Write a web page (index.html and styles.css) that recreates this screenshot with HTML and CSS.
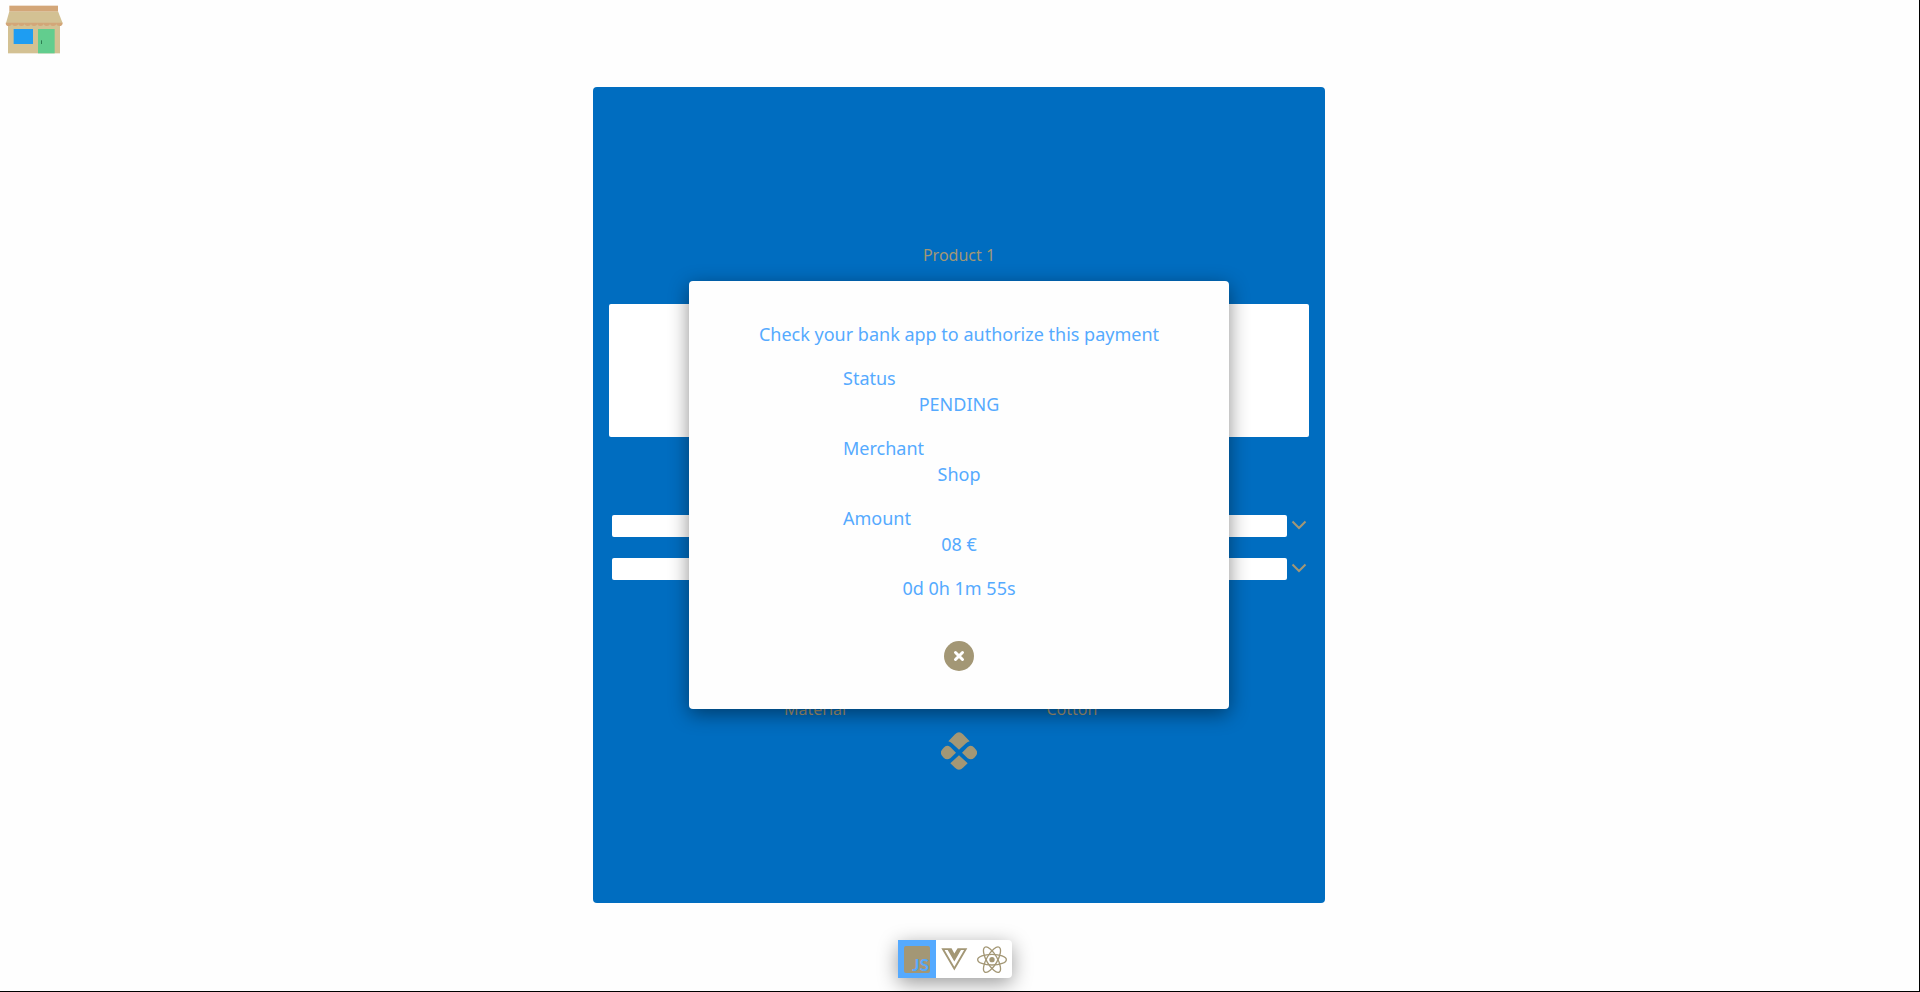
FILE: index.html
```html
<!DOCTYPE html>
<html lang="en">
<head>
<meta charset="utf-8">
<title>Shop</title>
<link rel="stylesheet" href="styles.css">
</head>
<body>
<div class="page">
  <header class="header">
    <a class="home" href="#" aria-label="Shop home">
      <svg class="home-icon" viewBox="0 0 240 192" aria-hidden="true">
        <rect x="24" y="66" width="156" height="94" fill="#d3c193"/>
        <path d="M28 34H174L188 70H18Z" fill="#d3c193"/>
        <rect x="28" y="17" width="146" height="17" fill="#d3a678"/>
        <path d="M17 68H188Q188 78 178 78Q169 78 169 70Q169 78 159 78Q150 78 150 70Q150 78 140 78Q131 78 131 70Q131 78 121 78Q112 78 112 70Q112 78 102 78Q93 78 93 70Q93 78 83 78Q74 78 74 70Q74 78 64 78Q55 78 55 70Q55 78 45 78Q36 78 36 70Q36 78 26 78Q17 78 17 68Z" fill="#d3a678"/>
        <rect x="41" y="87" width="58" height="45" fill="#1e9df2"/>
        <rect x="114" y="87" width="50" height="73" fill="#62cd8e"/>
        <rect x="123" y="121" width="3" height="11" fill="#2c7d52"/>
      </svg>
    </a>
  </header>

  <main class="product">
    <h1 class="product-name">Product 1</h1>
    <textarea class="description" aria-label="Description"></textarea>
    <div class="options">
      <div class="option">
        <input class="option-input" type="text" aria-label="Option 1">
        <button class="option-toggle" type="button" aria-label="Open option 1">
          <svg class="chevron" viewBox="0 0 14 8" aria-hidden="true"><path d="M0.500 0.500L7 7L13.500 0.500"/></svg>
        </button>
      </div>
      <div class="option">
        <input class="option-input" type="text" aria-label="Option 2">
        <button class="option-toggle" type="button" aria-label="Open option 2">
          <svg class="chevron" viewBox="0 0 14 8" aria-hidden="true"><path d="M0.500 0.500L7 7L13.500 0.500"/></svg>
        </button>
      </div>
    </div>
    <dl class="attributes">
      <dt>Material</dt>
      <dd>Cotton</dd>
    </dl>
    <button class="pay" type="button" aria-label="Pay">
      <svg class="pay-icon" viewBox="0 0 108 114" aria-hidden="true">
        <path d="M22 28L42 7Q54-5 66 7L86 28Q80 29 75 34L54 53L33 34Q28 29 22 28Z"/>
        <path d="M54 70L80 94L66 107Q54 119 42 107L28 94Z"/>
        <path d="M45 62L28 79Q17 86 8 77L3 71Q-4 62 3 53L8 47Q17 36 28 45Z"/>
        <path d="M63 62L80 79Q91 86 100 77L105 71Q112 62 105 53L100 47Q91 36 80 45Z"/>
      </svg>
    </button>

    <section class="modal" role="dialog" aria-labelledby="modal-title">
      <h2 class="modal-title" id="modal-title">Check your bank app to authorize this payment</h2>
      <dl class="payment">
        <div><dt>Status</dt><dd>PENDING</dd></div>
        <div><dt>Merchant</dt><dd>Shop</dd></div>
        <div><dt>Amount</dt><dd>08 €</dd></div>
      </dl>
      <p class="countdown">0d 0h 1m 55s</p>
      <button class="close" type="button" aria-label="Close">
        <svg class="close-icon" viewBox="0 0 12 12" aria-hidden="true"><path d="M2.500 2.500L9.500 9.500M9.500 2.500L2.500 9.500"/></svg>
      </button>
    </section>
  </main>

  <nav class="frameworks" aria-label="Framework">
    <button class="framework framework-active" type="button" aria-label="JavaScript">
      <svg class="framework-icon" viewBox="0 0 38 38" aria-hidden="true">
        <rect x="6" y="6" width="26" height="27" rx="2"/>
        <text class="js-mark" x="31" y="31" text-anchor="end">JS</text>
      </svg>
    </button>
    <button class="framework" type="button" aria-label="Vue">
      <svg class="framework-icon" viewBox="-92 -78 655 655" aria-hidden="true">
        <path d="M356.900 64.300H280l-56 88.600-48-88.600H0L224 448 448 64.300h-91.100zm-301.200 32h53.800L224 294.500 338.400 96.300h53.800L224 384.500 55.700 96.300z"/>
      </svg>
    </button>
    <button class="framework" type="button" aria-label="React">
      <svg class="framework-icon react" viewBox="-54 -59 114 114" aria-hidden="true">
        <circle r="8"/>
        <ellipse rx="43" ry="16"/>
        <ellipse rx="43" ry="16" transform="rotate(60)"/>
        <ellipse rx="43" ry="16" transform="rotate(120)"/>
      </svg>
    </button>
  </nav>
</div>
</body>
</html>
```
FILE: styles.css
```css
:root {
  --blue: #006dc0;
  --sky: #55aaff;
  --tan: #a39775;
  --paper: #fefefe;
}

* {
  box-sizing: border-box;
  margin: 0;
}

body {
  font: 16px/22px "Noto Sans", sans-serif;
  color: var(--tan);
  background: var(--paper);
}

button {
  display: flex;
  align-items: center;
  justify-content: center;
  padding: 0;
  border: 0;
  background: none;
  color: inherit;
  cursor: pointer;
}

svg {
  display: block;
  fill: currentColor;
}

.page {
  display: flex;
  flex-direction: column;
  align-items: center;
  min-height: 100vh;
  padding-right: 1px;
  border-right: 1px solid #000;
  border-bottom: 1px solid #000;
}

.header {
  align-self: stretch;
  display: flex;
  margin-bottom: 23px;
}

.home-icon {
  width: 80px;
  height: 64px;
}

.product {
  position: relative;
  display: flex;
  flex-direction: column;
  align-items: center;
  width: 732px;
  max-width: 100%;
  padding: 157px 16px 133px;
  border-radius: 4px;
  background: var(--blue);
}

.product-name {
  font-size: 16px;
  font-weight: 400;
  line-height: 22px;
}

.description {
  width: 100%;
  height: 133px;
  margin-top: 38px;
  border: 0;
  border-radius: 2px;
  background: #fff;
  resize: none;
}

.options {
  display: flex;
  flex-direction: column;
  align-self: stretch;
  gap: 21px;
  margin: 78px 3px 0;
}

.option {
  display: flex;
  gap: 5px;
}

.option-input {
  flex: 1;
  min-width: 0;
  height: 22px;
  border: 0;
  border-radius: 2px;
  background: #fff;
}

.option-toggle {
  padding-bottom: 2px;
}

.chevron {
  width: 14px;
  height: 8px;
  overflow: visible;
  fill: none;
  stroke: currentColor;
  stroke-width: 2;
}

.attributes {
  align-self: stretch;
  display: grid;
  grid-template-columns: 1fr 1fr;
  margin-top: 118px;
  padding-left: 25%;
}

.pay {
  margin-top: 12px;
}

.pay-icon {
  width: 36px;
  height: 38px;
}

.modal {
  position: absolute;
  top: 194px;
  left: 50%;
  transform: translateX(-50%);
  display: flex;
  flex-direction: column;
  align-items: center;
  gap: 18px;
  width: 540px;
  max-width: 100%;
  padding: 40px 40px 38px;
  border-radius: 4px;
  background: var(--paper);
  box-shadow: 0 5px 20px rgba(0, 0, 0, 0.45);
  color: var(--sky);
  font-size: 18px;
  line-height: 26px;
}

.modal-title {
  font-size: 18px;
  font-weight: 400;
}

.payment {
  display: grid;
  gap: 18px;
  width: 232px;
}

.payment dd {
  text-align: center;
}

.close {
  width: 30px;
  height: 30px;
  margin-top: 22px;
  border-radius: 50%;
  background: var(--tan);
}

.close-icon {
  width: 12px;
  height: 12px;
  stroke: #fff;
  stroke-width: 3;
  stroke-linecap: round;
}

.frameworks {
  display: flex;
  margin: 37px 8px 13px 0;
  border-radius: 4px;
  background: #fff;
  box-shadow: 0 5px 20px rgba(0, 0, 0, 0.4);
}

.framework-active {
  background: var(--sky);
}

.framework-icon {
  width: 38px;
  height: 38px;
}

.js-mark {
  fill: var(--sky);
  font: 700 17px Lato, sans-serif;
}

.react ellipse {
  fill: none;
  stroke: currentColor;
  stroke-width: 4;
}
```
